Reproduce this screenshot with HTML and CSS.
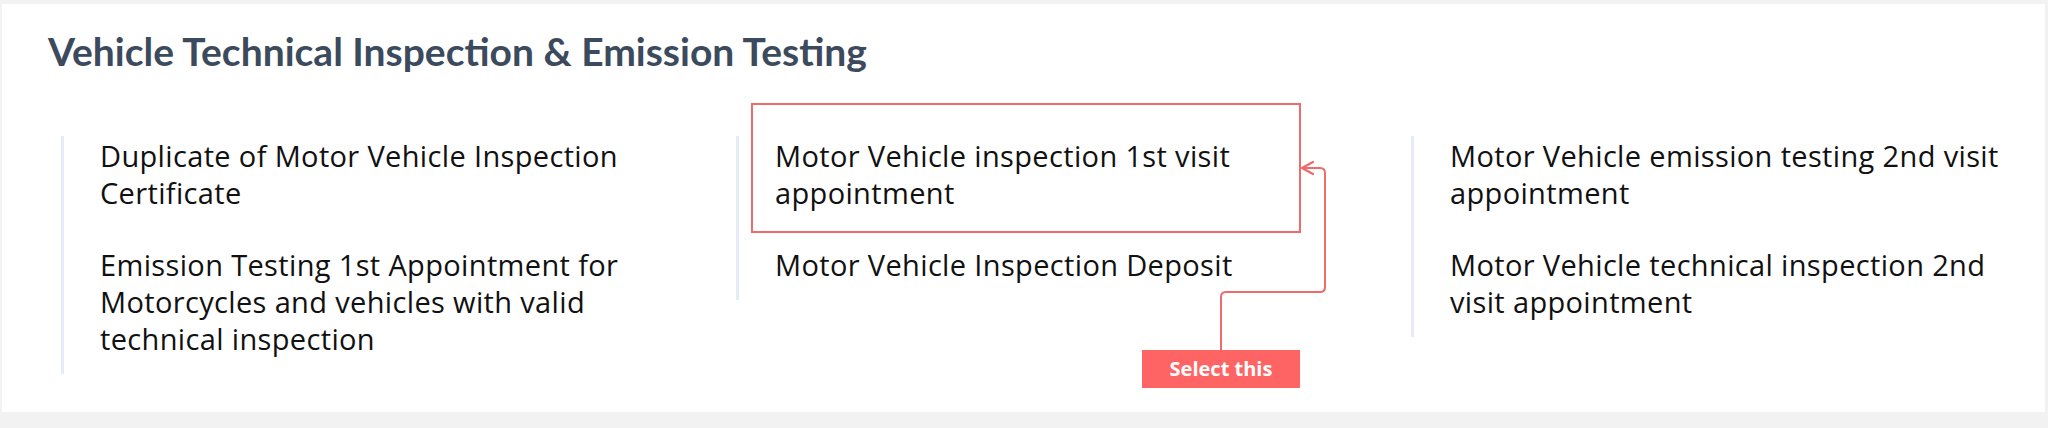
FILE: index.html
```html
<!DOCTYPE html>
<html lang="en">
<head>
<meta charset="utf-8">
<title>Vehicle Technical Inspection &amp; Emission Testing</title>
<link rel="stylesheet" href="styles.css">
</head>
<body>
<section class="panel">
  <h1 class="title">Vehicle Technical Inspection &amp; Emission Testing</h1>
  <div class="columns">
    <ul class="column">
      <li class="item">Duplicate of Motor Vehicle Inspection Certificate</li>
      <li class="item">Emission Testing 1st Appointment for Motorcycles and vehicles with valid technical inspection</li>
    </ul>
    <ul class="column">
      <li class="item">Motor Vehicle inspection 1st visit appointment</li>
      <li class="item">Motor Vehicle Inspection Deposit</li>
    </ul>
    <ul class="column">
      <li class="item">Motor Vehicle emission testing 2nd visit appointment</li>
      <li class="item">Motor Vehicle technical inspection 2nd visit appointment</li>
    </ul>
  </div>
  <svg class="annotation" width="2043" height="408" viewBox="0 0 2043 408" xmlns="http://www.w3.org/2000/svg" aria-hidden="true">
    <rect x="750" y="100" width="548" height="128" fill="none" stroke="#f06a6a" stroke-width="2"/>
    <path d="M1219 346 V293 Q1219 288 1224 288 H1318 Q1323 288 1323 283 V169 Q1323 164 1318 164 H1300" fill="none" stroke="#f06a6a" stroke-width="2"/>
    <path d="M1311 158 L1300 164 L1311 170" fill="none" stroke="#f06a6a" stroke-width="2.2" stroke-linejoin="round" stroke-linecap="round"/>
  </svg>
  <div class="badge">Select this</div>
</section>
</body>
</html>
```
FILE: styles.css
```css
html, body {
  margin: 0;
  padding: 0;
}

body {
  background: #f2f2f2;
  width: 2048px;
  height: 428px;
  overflow: hidden;
}

.panel {
  position: relative;
  box-sizing: border-box;
  margin: 4px 3px 0 2px;
  height: 408px;
  background: #ffffff;
  padding: 24px 34px 0 46px;
}

.title {
  margin: 0;
  font-family: Lato, "Noto Sans", sans-serif;
  font-weight: 700;
  font-size: 39px;
  line-height: 46px;
  color: #3b4a5d;
}

.columns {
  display: grid;
  grid-template-columns: repeat(3, 1fr);
  column-gap: 75px;
  align-items: start;
  margin-top: 62px;
  padding-left: 13px;
}

.column {
  list-style: none;
  margin: 0;
  display: flex;
  flex-direction: column;
  gap: 35px;
  border-left: 3px solid #e6ebf8;
  padding: 1px 0 17px 36px;
}

.item {
  font-family: "Open Sans", "Noto Sans", sans-serif;
  font-size: 29px;
  letter-spacing: 0.35px;
  line-height: 37px;
  color: #111111;
}

.annotation {
  position: absolute;
  left: 0;
  top: 0;
  pointer-events: none;
}

.badge {
  position: absolute;
  left: 1140px;
  top: 346px;
  width: 158px;
  height: 38px;
  background: #ff6464;
  color: #ffffff;
  font-family: "Open Sans", sans-serif;
  font-weight: 700;
  font-size: 20px;
  line-height: 38px;
  text-align: center;
}
```
